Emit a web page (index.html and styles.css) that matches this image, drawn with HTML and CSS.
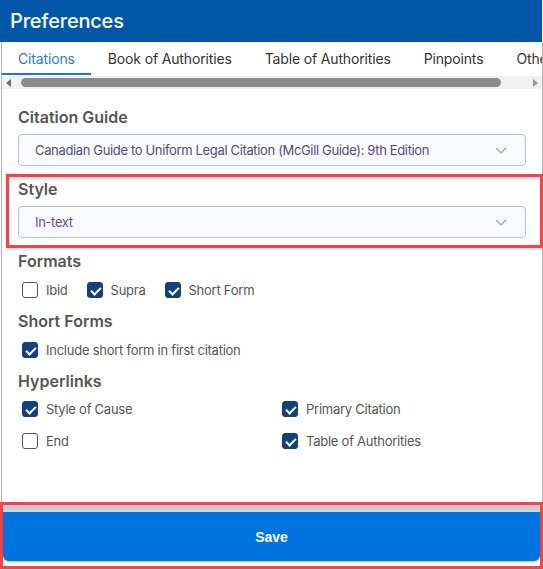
FILE: index.html
```html
<!DOCTYPE html>
<html>
<head>
<meta charset="utf-8">
<link rel="stylesheet" href="styles.css">
</head>
<body>
<div class="app">
  <header class="header">Preferences</header>
  <div class="body">
    <nav class="tabs">
      <div class="tab active">Citations</div>
      <div class="tab">Book of Authorities</div>
      <div class="tab">Table of Authorities</div>
      <div class="tab">Pinpoints</div>
      <div class="tab">Other</div>
    </nav>
    <div class="hscroll">
      <span class="arrow left"></span>
      <span class="thumb"></span>
      <span class="arrow right"></span>
    </div>
    <div class="content">
      <div class="label first">Citation Guide</div>
      <div class="select">
        <span class="select-text">Canadian Guide to Uniform Legal Citation (McGill Guide): 9th Edition</span>
        <svg class="chev" width="12" height="7" viewBox="0 0 12 7"><path d="M1 1l5 5 5-5" fill="none" stroke="#9aa0ab" stroke-width="1.2"/></svg>
      </div>
      <div class="highlight">
        <div class="label">Style</div>
        <div class="select">
          <span class="select-text purple">In-text</span>
          <svg class="chev" width="12" height="7" viewBox="0 0 12 7"><path d="M1 1l5 5 5-5" fill="none" stroke="#9aa0ab" stroke-width="1.2"/></svg>
        </div>
      </div>
      <div class="label sec">Formats</div>
      <div class="row formats">
        <label class="cb"><span class="box"></span>Ibid</label>
        <label class="cb"><span class="box on"></span>Supra</label>
        <label class="cb"><span class="box on"></span>Short Form</label>
      </div>
      <div class="label sec2">Short Forms</div>
      <div class="row">
        <label class="cb"><span class="box on"></span>Include short form in first citation</label>
      </div>
      <div class="label sec2">Hyperlinks</div>
      <div class="grid">
        <label class="cb"><span class="box on"></span>Style of Cause</label>
        <label class="cb"><span class="box on"></span>Primary Citation</label>
        <label class="cb"><span class="box"></span>End</label>
        <label class="cb"><span class="box on"></span>Table of Authorities</label>
      </div>
    </div>
  </div>
  <div class="footer">
    <div class="save">Save</div>
  </div>
</div>
</body>
</html>
```
FILE: styles.css
```css
* { box-sizing: border-box; }
html, body { margin: 0; padding: 0; background: #fff; }
body { font-family: Inter, "Open Sans", "Liberation Sans", sans-serif; }
.app { width: 543px; height: 569px; display: flex; flex-direction: column; overflow: hidden; }
.header {
  height: 42px; background: #0057a8; color: #fff; flex: none;
  font-size: 20px; font-weight: 500; padding-left: 10px;
  display: flex; align-items: center; letter-spacing: -0.2px;
  width: 542px;
}
.body {
  flex: 1; margin-left: 1px; width: 542px;
  border-left: 1px solid #b4b4b4; border-right: 1px solid #b4b4b4;
  display: flex; flex-direction: column; min-height: 0;
}
.tabs { display: flex; height: 34px; white-space: nowrap; overflow: hidden; flex: none; }
.tab {
  padding: 1px 16px 0 16px; font-size: 14px; color: #333; letter-spacing: -0.15px;
  display: flex; align-items: center; height: 33px;
  border-bottom: 2px solid transparent; flex: none;
}
.tab.active { color: #2a7ad8; border-bottom-color: #1b74e4; }
.tab + .tab { padding-left: 17px; }
.hscroll {
  height: 13px; background: #f1f1f1; display: flex; align-items: center; flex: none;
}
.arrow { width: 0; height: 0; border-top: 4px solid transparent; border-bottom: 4px solid transparent; flex: none; }
.arrow.left { border-right: 5px solid #6f6f6f; margin-left: 4px; }
.arrow.right { border-left: 5px solid #9b9b9b; margin-left: auto; margin-right: 4px; }
.thumb { height: 9px; width: 480px; background: #8c8c8c; border-radius: 5px; margin-left: 10px; flex: none; }
.content { padding: 0 16px; flex: 1; }
.label { font-size: 16px; font-weight: 600; color: #555; line-height: 20px; }
.label.first { margin-top: 18px; }
.select {
  margin-top: 7px; height: 32px; border: 1px solid #b6c2dc; border-radius: 4px;
  background: #fafbfc; display: flex; align-items: center; padding: 0 16px;
}
.select-text { font-size: 13px; color: #544a82; flex: 1; white-space: nowrap; letter-spacing: -0.35px; }
.select-text.purple { color: #6e4c94; }
.chev { flex: none; margin-right: 2px; }
.highlight {
  margin: 8px -17px 0 -12px;
  border: 3px solid #f1454a;
  padding: 2px 14px 7px 9px;
  box-shadow: inset 0 3px 4px -2px rgba(0,0,0,0.25), 0 1px 3px rgba(0,0,0,0.2);
}
.label.sec { margin-top: 3px; }
.label.sec2 { margin-top: 11px; }
.row { display: flex; gap: 19px; margin-top: 9px; padding-left: 4px; height: 20px; }
.cb { display: flex; align-items: center; gap: 8px; font-size: 13px; color: #555; height: 20px; letter-spacing: -0.25px; }
.box {
  width: 16px; height: 16px; border: 1px solid #555; border-radius: 3px; background: #fff;
  flex: none; position: relative;
}
.box.on { background: #163f7e; border-color: #163f7e; }
.box.on::after {
  content: ""; position: absolute; left: 5px; top: 2px; width: 4px; height: 8px;
  border: solid #fff; border-width: 0 2px 2px 0; transform: rotate(45deg);
}
.grid { display: grid; grid-template-columns: 260px 1fr; row-gap: 12px; margin-top: 8px; padding-left: 4px; }
.footer {
  height: 67px; border: 3px solid #f1454a; flex: none;
  padding-top: 7px; padding-bottom: 4px;
  background: linear-gradient(#c4c4c8, #d8d8dc 7px, #fff 7px);
}
.save {
  height: 49px; background: #0074de; color: #fff; font-weight: 700; font-size: 14px;
  font-family: "Liberation Sans", Arial, sans-serif;
  display: flex; align-items: center; justify-content: center;
  border-radius: 0 0 6px 6px;
  box-shadow: 0 1px 2px rgba(0,0,0,0.3);
}
```
